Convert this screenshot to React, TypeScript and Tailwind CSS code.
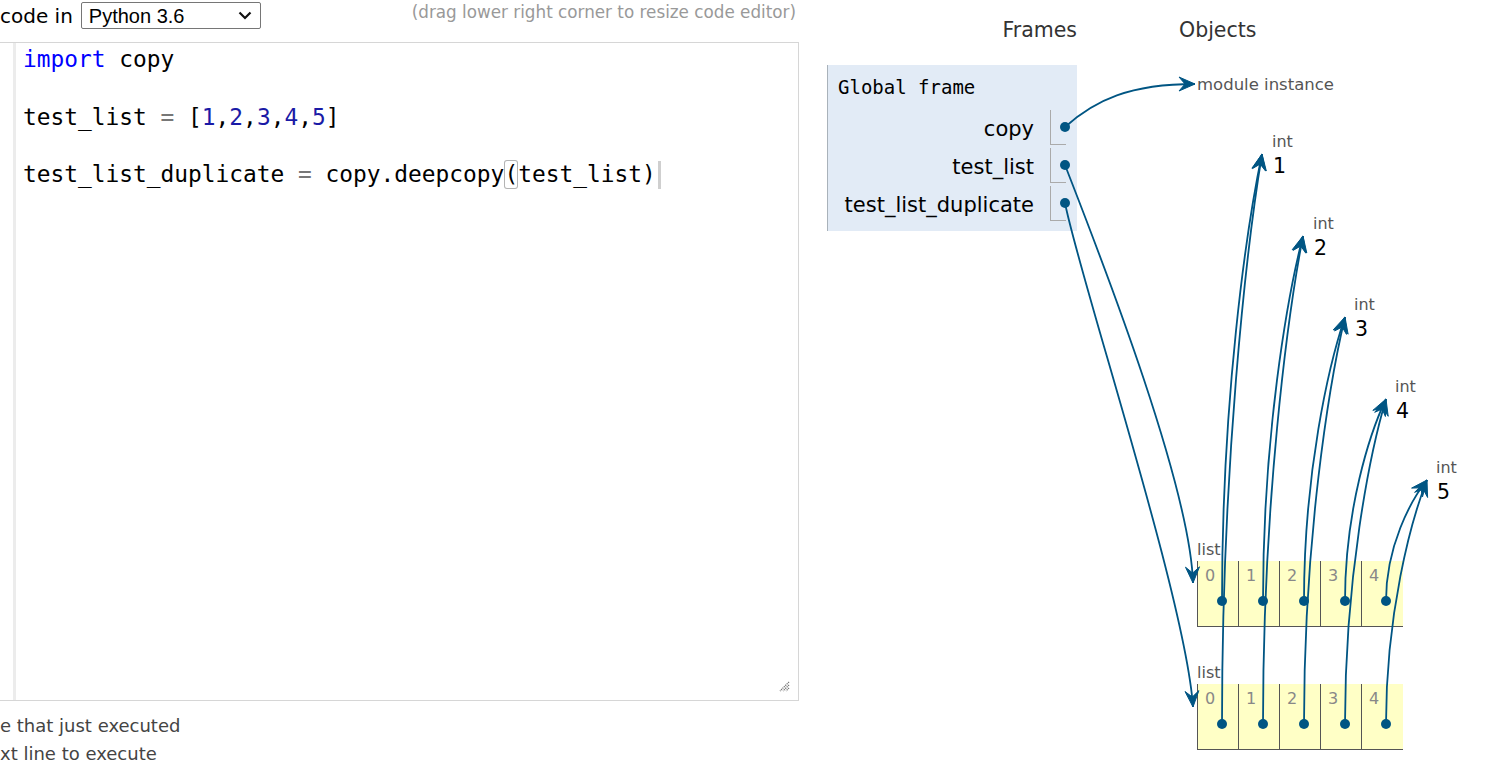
import React from "react";

const BLUE = "#005583";
const SANS = { fontFamily: '"DejaVu Sans", Verdana, sans-serif' } as const;

type Pt = [number, number];

function headPoints(tip: Pt, from: Pt, L = 16, W = 7, M = 10): string {
  const dx = tip[0] - from[0];
  const dy = tip[1] - from[1];
  const len = Math.hypot(dx, dy) || 1;
  const ux = dx / len;
  const uy = dy / len;
  const nx = -uy;
  const ny = ux;
  const p1: Pt = [tip[0] - L * ux + W * nx, tip[1] - L * uy + W * ny];
  const p2: Pt = [tip[0] - M * ux, tip[1] - M * uy];
  const p3: Pt = [tip[0] - L * ux - W * nx, tip[1] - L * uy - W * ny];
  return [tip, p1, p2, p3].map((p) => `${p[0].toFixed(1)},${p[1].toFixed(1)}`).join(" ");
}

function Arrow({ p0, c1, c2, p3 }: { p0: Pt; c1: Pt; c2: Pt; p3: Pt }) {
  const d = `M${p0[0]},${p0[1]} C${c1[0]},${c1[1]} ${c2[0]},${c2[1]} ${p3[0]},${p3[1]}`;
  return (
    <g>
      <path d={d} fill="none" stroke={BLUE} strokeWidth={1.8} />
      <polygon points={headPoints(p3, c2)} fill={BLUE} stroke={BLUE} strokeWidth={1} strokeLinejoin="round" />
    </g>
  );
}

const intTips: Pt[] = [
  [1262, 154],
  [1303, 236],
  [1345, 317],
  [1386, 399],
  [1427, 480],
];

function elemArrow(sx: number, sy: number, tip: Pt) {
  const dY = sy - tip[1];
  const dX = tip[0] - sx;
  return {
    p0: [sx, sy] as Pt,
    c1: [sx, sy - 0.45 * dY] as Pt,
    c2: [tip[0] - 0.4 * dX, tip[1] + 0.17 * dY] as Pt,
    p3: tip,
  };
}

function ListObj({ top }: { top: number }) {
  return (
    <div className="absolute left-[1197px] w-[206px]" style={{ top }}>
      <div className="h-[22px] text-[16px] leading-[22px] text-[#555]" style={SANS}>
        list
      </div>
      <div className="flex h-[66px] border-b border-[#555] bg-[#ffffc6]">
        {[0, 1, 2, 3, 4].map((i) => (
          <div
            key={i}
            className="w-[41px] h-full border-l border-[#555] pl-[7px] pt-[5px] text-[16px] leading-[20px] text-[#888]"
            style={SANS}
          >
            {i}
          </div>
        ))}
      </div>
    </div>
  );
}

function IntObj({ i }: { i: number }) {
  const left = 1272 + 41 * i;
  const top = 132 + 81.5 * i;
  return (
    <div className="absolute" style={{ left, top, ...SANS }}>
      <div className="text-[16px] leading-[20px] text-[#555]">int</div>
      <div className="text-[20.5px] leading-[24px] text-black pl-[1px] mt-[2px]">{i + 1}</div>
    </div>
  );
}

export default function App() {
  const codeFont = { fontFamily: '"DejaVu Sans Mono", "Liberation Mono", monospace' } as const;
  const dots: Pt[] = [
    [1065, 127],
    [1065, 165],
    [1065, 203],
  ];
  for (let k = 0; k < 5; k++) {
    dots.push([1222 + 41 * k, 601]);
    dots.push([1222 + 41 * k, 724]);
  }

  return (
    <div className="relative w-[1510px] h-[768px] overflow-hidden bg-white flex text-[#222]">
      {/* Left column: editor */}
      <div className="w-[799px] shrink-0 flex flex-col">
        <div className="h-[42px] flex items-start">
          <span className="mt-[4px] text-[20px] leading-[24px] text-black whitespace-nowrap" style={SANS}>
            code in
          </span>
          <div
            className="ml-[8px] mt-[2px] w-[180px] h-[27px] border border-[#767676] rounded-[2px] flex items-center justify-between pl-[7px] pr-[8px] bg-white"
            style={{ fontFamily: '"Liberation Sans", Arial, sans-serif' }}
          >
            <span className="text-[20px] leading-[24px] text-black">Python 3.6</span>
            <svg width="14" height="9" viewBox="0 0 14 9">
              <path d="M1.5 1.5 L7 7 L12.5 1.5" fill="none" stroke="#111" strokeWidth="2.2" />
            </svg>
          </div>
          <span
            className="ml-auto mr-[3px] mt-[1px] text-[16.8px] leading-[22px] text-[#999] whitespace-nowrap"
            style={SANS}
          >
            (drag lower right corner to resize code editor)
          </span>
        </div>

        <div className="h-[659px] border border-l-0 border-[#d6d6d6] flex relative">
          <div className="w-[13px] shrink-0" />
          <div className="w-[3px] shrink-0 bg-[#ececec]" />
          <div
            className="pl-[7px] pt-[2px] text-[22.85px] leading-[28.75px] text-black whitespace-pre"
            style={codeFont}
          >
            <div>
              <span className="text-[#0000ff]">import</span> copy
            </div>
            <div>&nbsp;</div>
            <div>
              test_list <span className="text-[#777]">=</span> [<span className="text-[#1a1aa6]">1</span>,
              <span className="text-[#1a1aa6]">2</span>,<span className="text-[#1a1aa6]">3</span>,
              <span className="text-[#1a1aa6]">4</span>,<span className="text-[#1a1aa6]">5</span>]
            </div>
            <div>&nbsp;</div>
            <div className="flex items-center">
              <span>test_list_duplicate </span>
              <span className="text-[#777]">=</span>
              <span> copy.deepcopy</span>
              <span className="inline-block h-[29px] leading-[29px] rounded-[3px] shadow-[inset_0_0_0_1px_#b4b4b4]">
                (
              </span>
              <span>test_list)</span>
              <span className="inline-block w-[3px] h-[28px] bg-[#cfcfcf] ml-[2px]" />
            </div>
          </div>
          <svg className="absolute right-[8px] bottom-[8px]" width="12" height="12" viewBox="0 0 12 12">
            <path d="M11 2 L2 11 M11 5 L5 11 M11 8 L8 11" stroke="#777" strokeWidth="1.3" strokeDasharray="1.2 0.8" />
          </svg>
        </div>

        <div className="pt-[11px] text-[18px] leading-[28px] text-[#444] whitespace-nowrap" style={SANS}>
          <div>e that just executed</div>
          <div>xt line to execute</div>
        </div>
      </div>

      {/* Right column: frames */}
      <div className="flex-1 pl-[28px] pt-[18px]" style={SANS}>
        <div className="flex h-[24px]">
          <div className="w-[250px] text-right text-[20.5px] leading-[24px] text-[#333]">Frames</div>
          <div className="ml-[102px] text-[20.5px] leading-[24px] text-[#333]">Objects</div>
        </div>
        <div className="mt-[23px] w-[250px] h-[166px] bg-[#e2ebf6] border-l border-[#a9b2ba] pt-[11px]">
          <div className="pl-[10px] text-[19px] leading-[22px] text-black" style={codeFont}>
            Global frame
          </div>
          <div className="mt-[12px]">
            {["copy", "test_list", "test_list_duplicate"].map((n) => (
              <div key={n} className="h-[38px] flex items-start justify-end">
                <span className="mr-[16px] text-[21px] leading-[38px] text-black">{n}</span>
                <div className="w-[16px] h-[35px] border-l border-b border-[#aaa] mr-[11px]" />
              </div>
            ))}
          </div>
        </div>
      </div>

      {/* Heap objects (diagram canvas) */}
      <div className="absolute inset-0 pointer-events-none">
        <div className="absolute left-[1197px] top-[74px] text-[16.5px] leading-[22px] text-[#555]" style={SANS}>
          module instance
        </div>
        {[0, 1, 2, 3, 4].map((i) => (
          <IntObj key={i} i={i} />
        ))}
        <ListObj top={539} />
        <ListObj top={662} />

        <svg className="absolute inset-0" width="1510" height="768">
          <Arrow p0={[1065, 127]} c1={[1095, 100]} c2={[1130, 84]} p3={[1195, 84]} />
          <Arrow p0={[1065, 165]} c1={[1090, 230]} c2={[1190, 480]} p3={[1193, 583]} />
          <Arrow p0={[1065, 203]} c1={[1080, 280]} c2={[1186, 600]} p3={[1193, 707]} />
          {[0, 1, 2, 3, 4].map((k) => {
            const a1 = elemArrow(1222 + 41 * k, 601, intTips[k]);
            const a2 = elemArrow(1222 + 41 * k, 724, intTips[k]);
            return (
              <g key={k}>
                <Arrow {...a1} />
                <Arrow {...a2} />
              </g>
            );
          })}
          {dots.map((d, i) => (
            <circle key={i} cx={d[0]} cy={d[1]} r={5} fill={BLUE} />
          ))}
        </svg>
      </div>
    </div>
  );
}
